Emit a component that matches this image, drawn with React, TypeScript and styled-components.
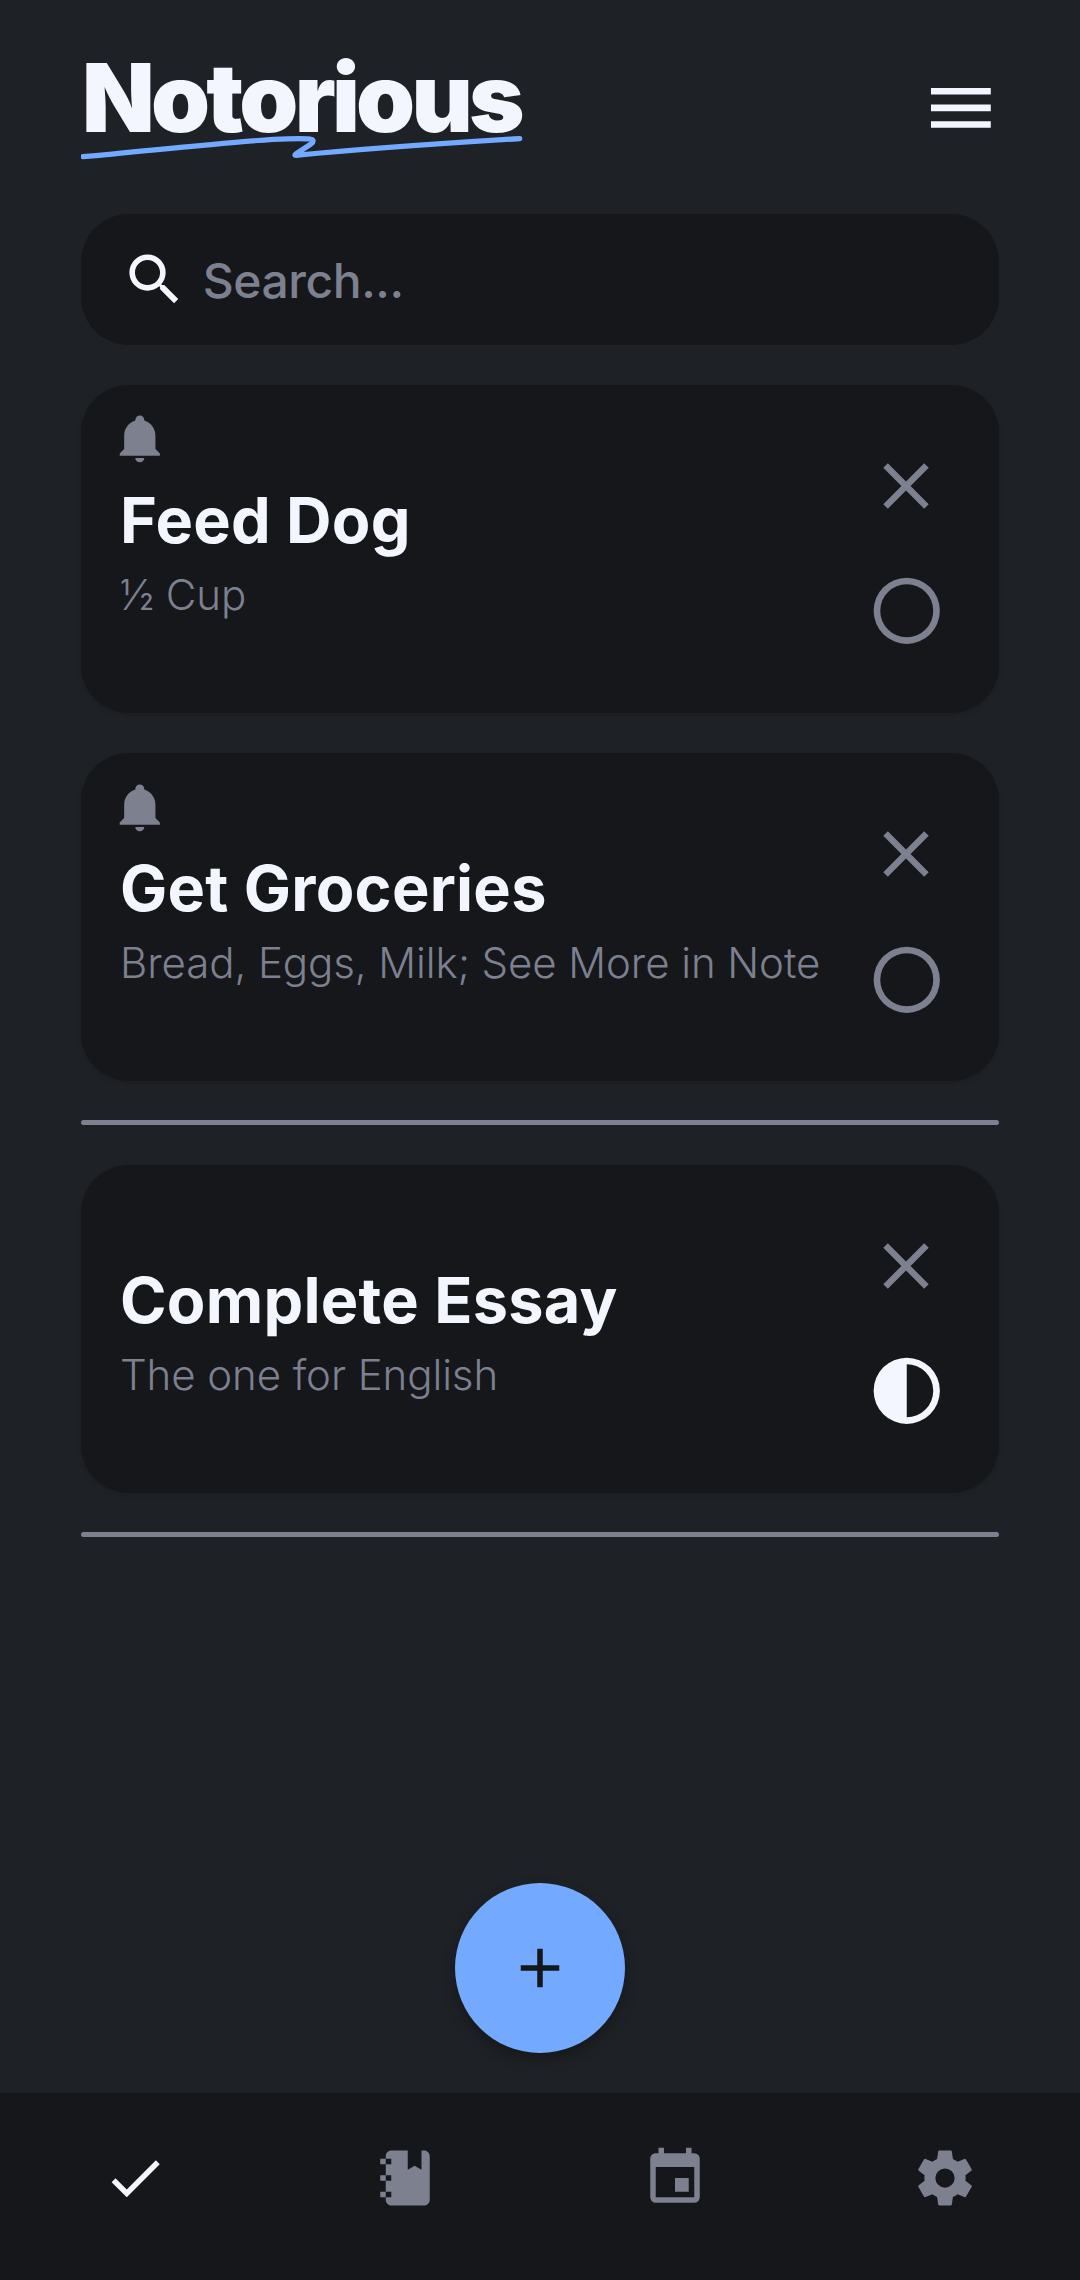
import React from "react";
import styled, { createGlobalStyle } from "styled-components";

const color = {
  page: "#1e2125",
  surface: "#16171a",
  text: "#f3f6ff",
  muted: "#7c808f",
  accent: "#73a9ff",
};

const GlobalStyle = createGlobalStyle`
  * { box-sizing: border-box; }
  body { margin: 0; background: ${color.page}; }
  button { padding: 0; border: 0; background: none; display: flex; }
`;

const paths = {
  menu: "M3,6H21V8H3V6M3,11H21V13H3V11M3,16H21V18H3V16Z",
  search:
    "M9.5,3A6.5,6.5 0 0,1 16,9.5C16,11.11 15.41,12.59 14.44,13.73L14.71,14H15.5L20.5,19L19,20.5L14,15.5V14.71L13.73,14.44C12.59,15.41 11.11,16 9.5,16A6.5,6.5 0 0,1 3,9.5A6.5,6.5 0 0,1 9.5,3M9.5,5C7,5 5,7 5,9.5C5,12 7,14 9.5,14C12,14 14,12 14,9.5C14,7 12,5 9.5,5Z",
  bell: "M21,19V20H3V19L5,17V11C5,7.9 7.03,5.17 10,4.29C10,4.19 10,4.1 10,4A2,2 0 0,1 12,2A2,2 0 0,1 14,4C14,4.1 14,4.19 14,4.29C16.97,5.17 19,7.9 19,11V17L21,19M14,21A2,2 0 0,1 12,23A2,2 0 0,1 10,21",
  close:
    "M19,6.41L17.59,5L12,10.59L6.41,5L5,6.41L10.59,12L5,17.59L6.41,19L12,13.41L17.59,19L19,17.59L13.41,12L19,6.41Z",
  circle:
    "M12,20A8,8 0 0,1 4,12A8,8 0 0,1 12,4A8,8 0 0,1 20,12A8,8 0 0,1 12,20M12,2A10,10 0 0,0 2,12A10,10 0 0,0 12,22A10,10 0 0,0 22,12A10,10 0 0,0 12,2Z",
  half: "M12,2A10,10 0 0,0 2,12A10,10 0 0,0 12,22A10,10 0 0,0 22,12A10,10 0 0,0 12,2M12,4A8,8 0 0,1 20,12A8,8 0 0,1 12,20V4Z",
  plus: "M19,13H13V19H11V13H5V11H11V5H13V11H19V13Z",
  check: "M21,7L9,19L3.5,13.5L4.91,12.09L9,16.17L19.59,5.59L21,7Z",
  notebook:
    "M3,7V5H5V4C5,2.89 5.9,2 7,2H13V9L15.5,7.5L18,9V2H19C20.05,2 21,2.95 21,4V20C21,21.05 20.05,22 19,22H7C5.95,22 5,21.05 5,20V19H3V17H5V13H3V11H5V7H3M7,11H5V13H7V11M7,7V5H5V7H7M7,19V17H5V19H7Z",
  calendar:
    "M19,19H5V8H19M19,3H18V1H16V3H8V1H6V3H5C3.89,3 3,3.9 3,5V19A2,2 0 0,0 5,21H19A2,2 0 0,0 21,19V5A2,2 0 0,0 19,3M17,12H12V17H17V12Z",
  cog: "M12,15.5A3.5,3.5 0 0,1 8.5,12A3.5,3.5 0 0,1 12,8.5A3.5,3.5 0 0,1 15.5,12A3.5,3.5 0 0,1 12,15.5M19.43,12.97C19.47,12.65 19.5,12.33 19.5,12C19.5,11.67 19.47,11.34 19.43,11L21.54,9.37C21.73,9.22 21.78,8.95 21.66,8.73L19.66,5.27C19.54,5.05 19.27,4.96 19.05,5.05L16.56,6.05C16.04,5.66 15.5,5.32 14.87,5.07L14.5,2.42C14.46,2.18 14.25,2 14,2H10C9.75,2 9.54,2.18 9.5,2.42L9.13,5.07C8.5,5.32 7.96,5.66 7.44,6.05L4.95,5.05C4.73,4.96 4.46,5.05 4.34,5.27L2.34,8.73C2.21,8.95 2.27,9.22 2.46,9.37L4.57,11C4.53,11.34 4.5,11.67 4.5,12C4.5,12.33 4.53,12.65 4.57,12.97L2.46,14.63C2.27,14.78 2.21,15.05 2.34,15.27L4.34,18.73C4.46,18.95 4.73,19.03 4.95,18.95L7.44,17.94C7.96,18.34 8.5,18.68 9.13,18.93L9.5,21.58C9.54,21.82 9.75,22 10,22H14C14.25,22 14.46,21.82 14.5,21.58L14.87,18.93C15.5,18.67 16.04,18.34 16.56,17.94L19.05,18.95C19.27,19.03 19.54,18.95 19.66,18.73L21.66,15.27C21.78,15.05 21.73,14.78 21.54,14.63L19.43,12.97Z",
};

type IconName = keyof typeof paths;

const Glyph = styled.svg<{ $size: number; $color: string }>`
  display: block;
  flex: none;
  width: ${(p) => p.$size}px;
  height: ${(p) => p.$size}px;
  fill: ${(p) => p.$color};
`;

function Icon({ name, size, tint }: { name: IconName; size: number; tint: string }) {
  return (
    <Glyph viewBox="0 0 24 24" $size={size} $color={tint} aria-hidden="true">
      <path fillRule="evenodd" d={paths[name]} />
    </Glyph>
  );
}

const Screen = styled.div`
  display: flex;
  flex-direction: column;
  width: 1080px;
  height: 2280px;
  background: ${color.page};
  color: ${color.text};
  font-family: Inter, Roboto, sans-serif;
`;

const Content = styled.main`
  flex: 1;
  display: flex;
  flex-direction: column;
  padding: 0 81px;
`;

const Header = styled.header`
  display: flex;
  justify-content: space-between;
  height: 214px;
  padding-top: 49px;
`;

const Logo = styled.div`
  display: flex;
  flex-direction: column;
`;

const Wordmark = styled.h1`
  margin: 0;
  padding-left: 1px;
  font-size: 94.5px;
  line-height: 97px;
  font-weight: 900;
  letter-spacing: -3.75px;
  white-space: nowrap;
`;

const Swoosh = styled.svg`
  display: block;
  width: 444px;
  height: 28px;
  margin-top: -12px;
  fill: none;
  stroke: ${color.accent};
  stroke-width: 5.2;
  stroke-linecap: round;
  stroke-linejoin: round;
`;

const MenuButton = styled.button`
  height: 80px;
  margin: 19.4px -2.2px 0 0;
`;

const SearchBar = styled.label`
  display: flex;
  align-items: center;
  flex: none;
  height: 131px;
  padding: 0 40.4px;
  border-radius: 48px;
  background: ${color.surface};
`;

const SearchText = styled.span`
  margin-left: 14.4px;
  padding-top: 3px;
  font-size: 48px;
  line-height: 60px;
  font-weight: 500;
  letter-spacing: -0.45px;
  color: ${color.muted};
`;

const List = styled.section`
  display: flex;
  flex-direction: column;
  gap: 39.7px;
  padding-top: 39.7px;
`;

const Card = styled.article`
  display: flex;
  justify-content: space-between;
  align-items: center;
  height: 328.5px;
  padding: 0 53px 0 39px;
  border-radius: 48px;
  background: ${color.surface};
  box-shadow: 0 2px 4px rgba(0, 0, 0, 0.1);
`;

const Details = styled.div`
  align-self: stretch;
  display: flex;
  flex-direction: column;
  padding-top: 26.8px;
`;

const Reminder = styled.div`
  height: 72.5px;
  margin-left: -7.2px;
`;

const Title = styled.h2`
  margin: 0;
  font-size: 63px;
  line-height: 72px;
  font-weight: 700;
  letter-spacing: 0.25px;
  white-space: nowrap;
`;

const Note = styled.p`
  margin: 14px 0 0;
  font-size: 42px;
  line-height: 50px;
  font-weight: 300;
  letter-spacing: -0.08px;
  color: ${color.muted};
  white-space: nowrap;
`;

const Actions = styled.div`
  display: flex;
  flex-direction: column;
  align-items: center;
  gap: 46.4px;
  width: 79.5px;
`;

const Divider = styled.hr`
  width: 100%;
  height: 5.1px;
  margin: -0.8px 0 -0.5px;
  border: 0;
  border-radius: 3px;
  background: ${color.muted};
`;

const AddButton = styled.button`
  align-items: center;
  justify-content: center;
  align-self: center;
  flex: none;
  width: 170px;
  height: 170px;
  margin: auto 0 40px;
  border-radius: 50%;
  background: ${color.accent};
  box-shadow: 0 6px 14px rgba(0, 0, 0, 0.28);
`;

const TabBar = styled.nav`
  display: grid;
  grid-template-columns: repeat(4, 1fr);
  flex: none;
  height: 187px;
  padding-top: 52px;
  background: ${color.surface};
`;

const Tab = styled.button`
  justify-content: center;
  align-items: flex-start;
`;

type Task = { title: string; note: string; reminder?: boolean; started?: boolean };

const groups: Task[][] = [
  [
    { title: "Feed Dog", note: "½ Cup", reminder: true },
    { title: "Get Groceries", note: "Bread, Eggs, Milk; See More in Note", reminder: true },
  ],
  [{ title: "Complete Essay", note: "The one for English", started: true }],
];

const tabs: IconName[] = ["check", "notebook", "calendar", "cog"];

function TaskCard({ title, note, reminder, started }: Task) {
  return (
    <Card>
      <Details>
        <Reminder>{reminder && <Icon name="bell" size={53.6} tint={color.muted} />}</Reminder>
        <Title>{title}</Title>
        <Note>{note}</Note>
      </Details>
      <Actions>
        <button aria-label="Delete">
          <Icon name="close" size={78} tint={color.muted} />
        </button>
        <button aria-label="Status">
          <Icon
            name={started ? "half" : "circle"}
            size={79.5}
            tint={started ? color.text : color.muted}
          />
        </button>
      </Actions>
    </Card>
  );
}

export default function App() {
  return (
    <Screen>
      <GlobalStyle />
      <Content>
        <Header>
          <Logo>
            <Wordmark>Notorious</Wordmark>
            <Swoosh viewBox="0 0 444 28">
              <path d="M2 22.7C70 16.5 132 9.5 192 5.3C210 4.5 224 4.4 229 5C233 5.4 233 7.6 230 10L215.5 19.5C213 21.4 214 21.6 217 21.2C270 16 360 9.5 438.8 4.6" />
            </Swoosh>
          </Logo>
          <MenuButton aria-label="Menu">
            <Icon name="menu" size={79.75} tint={color.text} />
          </MenuButton>
        </Header>
        <SearchBar>
          <Icon name="search" size={67} tint={color.text} />
          <SearchText>Search...</SearchText>
        </SearchBar>
        <List>
          {groups.map((tasks, i) => (
            <React.Fragment key={i}>
              {tasks.map((task) => (
                <TaskCard key={task.title} {...task} />
              ))}
              <Divider />
            </React.Fragment>
          ))}
        </List>
        <AddButton aria-label="Add">
          <Icon name="plus" size={66} tint={color.surface} />
        </AddButton>
      </Content>
      <TabBar>
        {tabs.map((name, i) => (
          <Tab key={name} aria-label={name}>
            <Icon name={name} size={66} tint={i === 0 ? color.text : color.muted} />
          </Tab>
        ))}
      </TabBar>
    </Screen>
  );
}
